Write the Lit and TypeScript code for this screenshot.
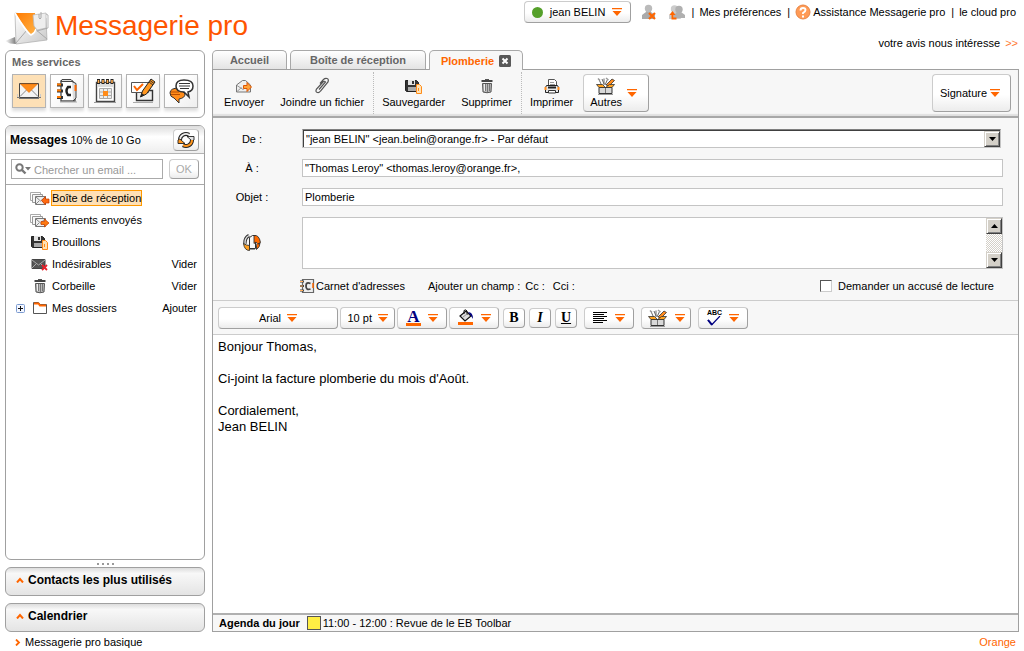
import { LitElement, html, css, svg, TemplateResult } from "lit";
import { customElement, property, state } from "lit/decorators.js";
import { classMap } from "lit/directives/class-map.js";

const O = "#ff6600";

interface Icon {
  w: number;
  h: number;
  art: TemplateResult;
}

const stack = svg`<path d="M.5 1.5h10v8H.5z" fill="#fff" stroke="#aaa"/><path d="M2.500 3.500h10v8h-10z" fill="#f6f6f6" stroke="#999"/><path d="M5.500 5.500h10v8h-10z" fill="#eee" stroke="#777"/><path d="M6 6l4.500 4L15 6M6 13l3-3M15 13l-3-3" fill="none" stroke="#888"/>`;
const floppy = svg`<path d="M.5 1.500h11l2 2v9H1.500l-1-1z" fill="#333" stroke="#222"/><path d="M3 1h7v5H3z" fill="#e4e4e4"/><path d="M7 2h2v3H7z" fill="#333"/><path d="M3 8h8v4H3z" fill="#aaa"/><path d="M11.500 5.500h3l2 2v7h-5z" fill="#ffe2b5" stroke="#ff8c1a"/><path d="M13.500 9v3" stroke="#ff8c1a"/>`;
const trash = svg`<path d="M6 1.500h4" stroke="#555" fill="none"/><path d="M2.500 3h11" stroke="#444" stroke-width="2" fill="none"/><path d="M3.500 5.500h9l-.500 8.500q-4 1.500-8 0z" fill="#bbb" stroke="#555"/><path d="M6.500 6v7M8.500 6v8M10.500 6v7" stroke="#777" fill="none"/><path d="M5.500 6v7" stroke="#eee"/>`;
const tools = svg`<path d="M5.500 8L3 2.500M8 8V1.500M9 8l2.500-5.500M6 2l2 5" stroke="#666" fill="none"/><path d="M2 1.500l2 2M10 1l2.500 2" stroke="#999" stroke-width="1.500"/><path d="M10 8l6-6 2.500 1.500L13 9z" fill="#ff8a1c" stroke="#333" stroke-width=".8"/><path d="M3 10.500h13v6H3z" fill="#d8d8d8" stroke="#333"/><path d="M.5 7.500h6l3 3H3zM18.500 7.500h-5l-4 3H16z" fill="#ffa320" stroke="#333" stroke-width=".8"/><path d="M9.500 11v5" stroke="#777"/><path d="M2 17.500h15" stroke="#999"/>`;
const book = svg`<path d="M7 3h11l3 3v17H7z" fill="#fff" stroke="#555" stroke-width="1.400"/><path d="M18 3.500l4 2V20l-3 3" fill="#ddd" stroke="#444"/><path d="M21.500 7v6" stroke="${O}" stroke-width="2"/><path d="M8 1.500h9l2 2H7z" fill="#ddd" stroke="#444"/><path d="M17 9h-3q-3 4 0 8h3" fill="none" stroke="#222" stroke-width="2.400"/><path d="M3 7h6M3 13h6M3 19.500h6" stroke="#333" stroke-width="3"/><path d="M3 6.500h4M3 12.500h4M3 19h4" stroke="#ff7a00" stroke-width="2"/><path d="M6 24h17" stroke="#aaa"/>`;

const icons: Record<string, Icon> = {
  logo: { w: 44, h: 38, art: svg`<defs><linearGradient id="a" x2="1" y2="1"><stop stop-color="#ff7a00"/><stop offset="1" stop-color="#ffb347"/></linearGradient><linearGradient id="b" x2="1"><stop stop-color="#888" stop-opacity="0"/><stop offset="1" stop-color="#777"/></linearGradient><linearGradient id="c" x2="1" y2="1"><stop stop-color="#fff"/><stop offset="1" stop-color="#c9c9c9"/></linearGradient></defs><g transform="translate(0 4)"><path d="M0 30l10-4 1 7-6-.5z" fill="url(#b)"/><path d="M10 2l31 5 1 22-31 4z" fill="url(#c)" stroke="#aaa" stroke-width=".7"/><path d="M11 32l11-13M42 28L30 18" stroke="#aaa" fill="none"/><path d="M10 2h20l1 18-5 4Q19 15 10 2z" fill="url(#a)"/><path d="M10 2q11 19 16 22 4-2 5-6" fill="none" stroke="#fff" stroke-width="1.500"/><path d="M28 4l13-2v15l-9 2-3-4z" fill="#eee" stroke="#bbb" stroke-width=".8"/><path d="M41 3l2 1v13l-11 3" fill="none" stroke="#999" stroke-width=".7"/><path d="M34 3v4q1 2 2 0V1" fill="none" stroke="#999" stroke-width=".8"/></g>` },
  mail: { w: 26, h: 26, art: svg`<path d="M3.500 5.500h19v14h-19z" fill="#f3f3f3" stroke="#444"/><path d="M4 18.500l7-7M22 18.500l-7-7" stroke="#888"/><path d="M4.500 6h17L13 14.500z" fill="#ff8c1a" stroke="#e06a00" stroke-width=".6"/><path d="M1 19.500h3M22 19.500h3M3 20.500h20" stroke="#777"/><path d="M1.500 16v3M24.500 16v3" stroke="#ccc"/>` },
  contacts: { w: 26, h: 26, art: book },
  calendar: { w: 26, h: 26, art: svg`<path d="M4.500 4.500h18v19h-18z" fill="#fff" stroke="#444" stroke-width="1.400"/><path d="M5 5h17v4H5z" fill="#ddd"/><path d="M6.500 1v5M11 1v5M15.500 1v5M20 1v5" stroke="#222" stroke-width="3"/><path d="M6.500 2v3M11 2v3M15.500 2v3M20 2v3" stroke="#ffab4d" stroke-width="1.600"/><path d="M7.500 10.500h12v10h-12zM7.500 14h12M7.500 17.500h12M11.500 10v11M15.500 10v11" fill="#eee" stroke="#aaa"/><path d="M11 13h5v5h-5z" fill="#ff8c1a"/><path d="M2 24.500h22" stroke="#999"/>` },
  tasks: { w: 26, h: 26, art: svg`<path d="M6.500 12.500h16v10h-16z" fill="#eee" stroke="#333" stroke-width="1.400"/><path d="M1.500 4.500h17v10h-17z" fill="#fff" stroke="#555"/><path d="M4 8l3 4 6-6" fill="none" stroke="${O}" stroke-width="2"/><path d="M10.500 19l2-6L21 1l4 3-8.500 12z" fill="#ff961e" stroke="#222"/><path d="M19 4l4 3M20 2.500l4 3" stroke="#333"/><path d="M10.500 19l4-2-3-2z" fill="#222"/><path d="M3 24.500h20" stroke="#aaa"/>` },
  chat: { w: 26, h: 26, art: svg`<path d="M11 10q-9 0-9 5 0 4 4 5l5 5v-4q6-1 6-5z" fill="#ff8c1a" stroke="#333"/><path d="M3 14h8M3 16.500h9" stroke="#b84e00"/><path d="M16 2q9 0 9 6 0 5-5 6l1 5-5-5q-8 0-8-6 0-6 8-6z" fill="#fff" stroke="#333" stroke-width="1.500"/><path d="M11 5.500h11M11 8h11M12 10.500h9" stroke="#333"/>` },
  refresh: { w: 18, h: 18, art: svg`<path d="M3 9a6 6 0 0 1 9-5.200" fill="none" stroke="#222" stroke-width="4"/><path d="M3 9a6 6 0 0 1 9-5.200" fill="none" stroke="#eee" stroke-width="1.800"/><path d="M10 5.500h7V9q-2 2-3 0z" fill="#e4e4e4" stroke="#222" stroke-width=".9"/><path d="M15 9a6 6 0 0 1-9 5.200" fill="none" stroke="#222" stroke-width="4"/><path d="M15 9a6 6 0 0 1-9 5.200" fill="none" stroke="#ff961e" stroke-width="2"/><path d="M8 12.500H1V9q2-2 3 0z" fill="#ff961e" stroke="#222" stroke-width=".9"/>` },
  swap: { w: 18, h: 18, art: svg`<path d="M6.500 3.500l3-2h3v13h-6z" fill="#f8f8f8" stroke="#333"/><path d="M4 15.500h8" stroke="#999"/><path d="M6 1.500Q1.500 4 2 10" fill="none" stroke="#333" stroke-width="3.400"/><path d="M6 1.500Q1.500 4 2 10" fill="none" stroke="#ddd" stroke-width="1.400"/><path d="M.5 9.500q3 2 6 2v5q-5 0-6-7z" fill="#ffa020" stroke="#333" stroke-width=".9"/><path d="M11 1.500q5-1 6.500 7L15 10l2-1q0 4-3.500 6.500v-4Q15 9 13 8l-2 1.500z" fill="#ff6a00" stroke="#333" stroke-width=".9"/>` },
  search: { w: 17, h: 12, art: svg`<circle cx="4.500" cy="4.500" r="3.200" fill="none" stroke="#777" stroke-width="2"/><path d="M7 7l3.500 3.500" stroke="#777" stroke-width="2.400"/><path d="M10 4h6l-3 3.500z" fill="#777"/>` },
  inbox: { w: 20, h: 15, art: svg`${stack}<path d="M11.500 9.500l4-4v2.500h3.500v4h-3.500v2z" fill="#ff6a10" stroke="#c43c00" stroke-width=".7"/>` },
  sent: { w: 20, h: 15, art: svg`${stack}<path d="M11 8.500h3.500V6l4.500 4-4.500 4v-2.500H11z" fill="#ff7a10" stroke="#c43c00" stroke-width=".7"/>` },
  draft: { w: 18, h: 15, art: floppy },
  junk: { w: 18, h: 13, art: svg`<path d="M1 1.500h13v9H1z" fill="#555" stroke="#444"/><path d="M1 2l6.500 5L14 2M1 10l4-4M14 10l-4-4" fill="none" stroke="#aaa"/><path d="M11 7l5 5M16 7l-5 5" stroke="#e8202a" stroke-width="1.800"/>` },
  trash: { w: 16, h: 16, art: trash },
  folder: { w: 16, h: 14, art: svg`<path d="M1.500 12.500v-11h5l1.500 2h6.500v9z" fill="#fff" stroke="#555"/><path d="M2 2.500h4.500L8 4.500h6" fill="none" stroke="${O}" stroke-width="2"/>` },
  send: { w: 18, h: 14, art: svg`<path d="M1.500 6l6-4.500h3L15.500 6v7h-14z" fill="#eee" stroke="#777"/><path d="M2 6.500l6 4 6-4M2 12.500l4.500-4" fill="none" stroke="#999"/><path d="M8.500 6.500H12V3.500L16.500 8 12 12.500V9.500H8.500z" fill="#ffa43a" stroke="#e05500"/>` },
  clip: { w: 18, h: 18, art: svg`<path d="M6 12.500L12.500 5q-1-1.500-2.500 0L3.500 12q-1.500 3 1 3.500 1.500.5 3-1.500L15 5q1-3-1-3.500t-3.500 1L7 6.500" fill="none" stroke="#555" stroke-width="1.200"/>` },
  print: { w: 16, h: 16, art: svg`<path d="M4.500 1.500h6l2 2v4h-8z" fill="#fff" stroke="#555"/><path d="M6 4.500h4M6 6.500h5" stroke="#999"/><path d="M2.500 7.500h11l1 2v5h-13v-5z" fill="#e6e6e6" stroke="#222"/><path d="M1.500 9v3M14.500 9v3" stroke="#ff8c1a" stroke-width="2"/><path d="M4 8.500h8v2H4z" fill="#222"/><path d="M4.500 12.500h7v2.500h-7z" fill="#fff" stroke="#333"/>` },
  tools: { w: 20, h: 18, art: tools },
  book: { w: 16, h: 16, art: svg`<path d="M3.500 1.500h11v13h-11z" fill="#eee" stroke="#666" stroke-width="1.200"/><path d="M11.500 5.500Q7 3.500 7 8t4.500 3" fill="none" stroke="#444" stroke-width="1.800"/><path d="M14 5v5" stroke="${O}" stroke-width="1.500"/><path d="M1 3.500h4M1 8h4M1 12.500h4" stroke="#444" stroke-width="2"/><path d="M1 3.500h3M1 8h3M1 12.500h3" stroke="#ffb060"/>` },
  userOff: { w: 16, h: 17, art: svg`<path d="M1 15v-4l4-3V3q2-3 5 0v5l4 3v4z" fill="#aaa"/><circle cx="7.500" cy="4.500" r="3.700" fill="#bbb"/><path d="M8 9l6 6M14 9l-6 6" stroke="${O}" stroke-width="2.200"/>` },
  users: { w: 18, h: 17, art: svg`<circle cx="6.500" cy="5" r="3.700" fill="#ccc"/><path d="M1 15v-4l3-3h6l3 7z" fill="#ccc"/><circle cx="11" cy="5.500" r="3.700" fill="#b0b0b0"/><path d="M6 14v-3l3-3h4l4 3v3z" fill="#b0b0b0"/><path d="M8.500 14.500h-4V10" fill="none" stroke="${O}" stroke-width="2"/><path d="M1.500 11l3-4 3 4z" fill="${O}"/>` },
  help: { w: 16, h: 16, art: svg`<circle cx="8" cy="8" r="7" fill="#ff9a55" stroke="#e88544"/><path d="M5.500 6.500q0-2.500 2.500-2.500t2.500 2q0 1.500-2.500 3v1" fill="none" stroke="#fff" stroke-width="1.900"/><path d="M7 11.500h2v2H7z" fill="#fff"/>` },
  close: { w: 12, h: 12, art: svg`<rect width="12" height="12" rx="1.500" fill="#595959"/><path d="M3.500 3.500l5 5M8.500 3.500l-5 5" stroke="#fff" stroke-width="2"/>` },
  drop: { w: 10, h: 8, art: svg`<path d="M0 0h10v1.300H0zM.5 3h9L5 8z" fill="${O}"/>` },
  up: { w: 8, h: 6, art: svg`<path d="M1 5.500L4 2l3 3.500" fill="none" stroke="${O}" stroke-width="2"/>` },
  right: { w: 6, h: 7, art: svg`<path d="M1 .5l3 3-3 3" fill="none" stroke="${O}" stroke-width="1.800"/>` },
  plus: { w: 9, h: 9, art: svg`<rect x=".5" y=".5" width="8" height="8" rx="1" fill="#f4f7ff" stroke="#7b9ad0"/><path d="M2 4.500h5M4.500 2v5" stroke="#111"/>` },
  tri: { w: 7, h: 4, art: svg`<path d="M0 0h7L3.500 4z" fill="#000"/>` },
  triUp: { w: 7, h: 4, art: svg`<path d="M0 4h7L3.500 0z" fill="#000"/>` },
  fill: { w: 16, h: 17, art: svg`<path d="M0 13h15v3H0z" fill="${O}"/><path d="M2 7l6-5 5 5-6 5z" fill="#ddd" stroke="#111" stroke-width="1.200"/><path d="M6 5V1.500Q8 0 9 2v4" fill="none" stroke="#111"/><path d="M10 3q5 0 5 7l-2-3z" fill="#000080"/><path d="M5 8l4-3" stroke="#999"/>` },
  align: { w: 15, h: 12, art: svg`<path d="M0 .5h14M0 2.500h11M0 4.500h14M0 6.500h11M0 8.500h14M0 10.500h10" stroke="#000"/>` },
  check: { w: 14, h: 10, art: svg`<path d="M1 4l4 4.500L13 0" fill="none" stroke="#000080" stroke-width="1.200"/><path d="M1 4l4 5" stroke="#000080" stroke-width="2"/>` },
};

const icon = (name: string) => {
  const i = icons[name];
  return html`<svg class="icon" aria-hidden="true" width=${i.w} height=${i.h} viewBox="0 0 ${i.w} ${i.h}">${i.art}</svg>`;
};

const base = css`
  * { box-sizing: border-box; }
  button, input, select, textarea { font: inherit; color: inherit; margin: 0; outline: none; }
  button { background: none; border: 0; padding: 0; cursor: pointer; }
  a { color: inherit; text-decoration: none; }
  .icon { display: block; flex: none; }
  .raised {
    border: 1px solid #ccc;
    border-right-color: #a0a0a0;
    border-bottom-color: #a0a0a0;
    border-radius: 4px;
    background: linear-gradient(#fff 55%, #ececec);
  }
`;

@customElement("mail-sidebar")
class MailSidebar extends LitElement {
  @state() private folder = 0;

  private services = [
    ["mail", "Messages"], ["contacts", "Contacts"], ["calendar", "Calendrier"], ["tasks", "Tâches"], ["chat", "Discussion"],
  ];
  private folders = [
    { icon: "inbox", name: "Boîte de réception" },
    { icon: "sent", name: "Eléments envoyés" },
    { icon: "draft", name: "Brouillons" },
    { icon: "junk", name: "Indésirables", action: "Vider" },
    { icon: "trash", name: "Corbeille", action: "Vider" },
    { icon: "folder", name: "Mes dossiers", action: "Ajouter", nested: true },
  ];

  static styles = [base, css`
    :host { display: flex; flex-direction: column; }
    .box { border: 1px solid #a0a0a0; border-radius: 6px; background: #fff; }
    .services { padding: 4px 6px 9px; margin-bottom: 7px; }
    h2 { margin: 0; font-size: 11px; line-height: 15px; color: #666; }
    .row { display: flex; gap: 4px; padding-top: 4px; }
    .service {
      width: 34px; height: 34px; display: grid; place-items: center;
      border: 1px solid #b4b4b4; background: linear-gradient(135deg, #fff 30%, #eee);
      box-shadow: 0 3px 3px #ddd;
    }
    .service.on { background: #fde0b6; }
    .messages { flex: 1; overflow: hidden; }
    .head {
      display: flex; align-items: center; justify-content: space-between; height: 28px;
      padding: 0 5px 0 4px; border-bottom: 1px solid #b4b4b4; background: linear-gradient(#ddd, #fff 40%, #eee);
    }
    .head b { font-size: 12px; }
    .sync { display: grid; place-items: center; width: 26px; height: 22px; }
    .search { display: flex; gap: 6px; height: 31px; padding: 5px 5px; border-bottom: 1px solid #a8a8a8; }
    .field { display: flex; align-items: center; flex: 1; min-width: 0; border: 1px solid #aaa; padding-left: 3px; gap: 2px; }
    .field input { border: 0; padding: 2px 0 0; width: 100%; min-width: 0; background: none; }
    .field input::placeholder { color: #999; opacity: 1; }
    .ok { width: 30px; color: #aaa; }
    ul { list-style: none; margin: 0; padding: 2px 7px 0 10px; }
    li { display: grid; grid-template-columns: 14px 20px 1fr auto; align-items: center; height: 22px; }
    .pic { display: grid; place-items: center; }
    .name { justify-self: start; border: 1px solid transparent; padding: 0; margin-left: 1px; line-height: 14px; }
    .name.on { background: #ffe0b5; border-color: #f90; }
    .grip { display: flex; justify-content: center; gap: 3px; padding: 3px 0 2px; }
    .grip i { width: 2px; height: 2px; background: #999; }
    .fold {
      display: flex; align-items: center; gap: 4px; height: 29px; margin-bottom: 7px; padding: 0 10px 3px; font-weight: bold; font-size: 12px;
      background: linear-gradient(#ddd, #f8f8f8 20%, #e4e4e4);
    }
    .last { margin-bottom: 0; }
  `];

  render() {
    return html`
      <section class="box services">
        <h2>Mes services</h2>
        <div class="row">
          ${this.services.map(([name, label], i) => html`<button class=${classMap({ service: true, on: i === 0 })} aria-label=${label}>${icon(name)}</button>`)}
        </div>
      </section>
      <section class="box messages">
        <div class="head">
          <span><b>Messages</b> 10% de 10 Go</span>
          <button class="sync raised" aria-label="Relever">${icon("refresh")}</button>
        </div>
        <div class="search">
          <div class="field">${icon("search")}<input aria-label="Chercher un email" placeholder="Chercher un email ..." /></div>
          <button class="ok raised">OK</button>
        </div>
        <ul>
          ${this.folders.map((f, i) => html`
            <li>
              <span>${f.nested ? icon("plus") : ""}</span>
              <span class="pic">${icon(f.icon)}</span>
              <button class=${classMap({ name: true, on: i === this.folder })} @click=${() => (this.folder = i)}>${f.name}</button>
              ${f.action ? html`<a href="#">${f.action}</a>` : ""}
            </li>`)}
        </ul>
      </section>
      <div class="grip"><i></i><i></i><i></i><i></i></div>
      <button class="box fold">${icon("up")}Contacts les plus utilisés</button>
      <button class="box fold last">${icon("up")}Calendrier</button>
    `;
  }
}

@customElement("mail-composer")
class MailComposer extends LitElement {
  @property() message = "";

  static styles = [base, css`
    :host { display: flex; flex-direction: column; min-width: 0; }
    .tabs { display: flex; gap: 3px; height: 20px; margin-bottom: -1px; z-index: 1; }
    .tab {
      display: flex; align-items: center; justify-content: center; gap: 5px; height: 19px; font-weight: bold; color: #666;
      border: 1px solid #a8a8a8; border-bottom: 0; border-radius: 5px 5px 0 0; background: linear-gradient(#fff, #e4e4e4);
    }
    .home { width: 75px; }
    .in { width: 136px; }
    .current { width: 94px; height: 20px; color: #f60; background: #f7f7f7; }
    .panel { flex: 1; display: flex; flex-direction: column; border: 1px solid #a0a0a0; background: #f7f7f7; }
    .actions { display: flex; align-items: center; height: 48px; padding: 0 7px 0 11px; border-bottom: 2px solid #a8a8a8; box-shadow: inset 0 -2px 1px #e0e0e0; }
    .group { display: flex; gap: 16px; padding-right: 9px; margin-right: 8px; height: 42px; align-items: center; border-right: 1px dotted #bbb; }
    .group:nth-child(3) { border: 0; padding-right: 0; margin-right: 10px; }
    .action { display: flex; flex-direction: column; align-items: center; line-height: 14px; }
    .pic { display: grid; place-items: center; height: 18px; }
    .others { display: flex; align-items: center; gap: 5px; width: 66px; height: 38px; padding: 0 6px; }
    .sign { display: flex; align-items: center; justify-content: center; gap: 3px; margin-left: auto; width: 79px; height: 38px; padding-right: 3px; }
    form { display: grid; grid-template-columns: 78px 1fr; column-gap: 11px; row-gap: 11px; align-items: center; padding: 11px 15px 6px 0; border-bottom: 1px solid #ccc; }
    .label { justify-self: center; }
    .text { width: 100%; height: 18px; border: 1px solid #c4c4c4; background: #fff; padding: 0 2px; }
    .from { display: flex; height: 19px; margin-right: 2px; border: 1px solid #c4c4c4; border-top-color: #808080; box-shadow: inset 1px 1px #404040; background: #fff; padding: 1px 0 0 1px; }
    .from select { flex: 1; min-width: 0; border: 0; appearance: none; background: none; padding: 0 2px; }
    .knob { display: grid; place-items: center; width: 16px; height: 16px; flex: none; background: #d4d0c8; border: 1px solid #d4d0c8; border-right-color: #404040; border-bottom-color: #404040; box-shadow: inset 1px 1px #fff, inset -1px -1px #808080; pointer-events: none; }
    .big { display: flex; height: 52px; border: 1px solid #c4c4c4; background: #fff; }
    .big textarea { flex: 1; border: 0; resize: none; background: none; overflow: hidden; }
    .bar { display: flex; flex-direction: column; justify-content: space-between; background: repeating-conic-gradient(#d4d0c8 0 25%, #fff 0 50%) 0 0 / 2px 2px; }
    .extra { grid-column: 1 / -1; display: flex; align-items: center; height: 16px; margin: -2px 9px 0 86px; }
    .extra a { margin-left: 1px; }
    .extra .add { margin: 0 4px 0 23px; }
    .extra .cci { margin-left: 8px; }
    .receipt { display: flex; align-items: center; gap: 6px; margin-left: auto; }
    .receipt input { appearance: none; width: 12px; height: 12px; border: 1px solid; border-color: #555 #ccc #ccc #555; background: #fff; }
    .format { display: flex; align-items: center; height: 34px; padding: 0 5px; gap: 2px; border-bottom: 1px solid #ccc; }
    .tool { display: flex; align-items: center; justify-content: center; gap: 3px; width: 50px; height: 22px; }
    .tool.pair { gap: 7px; }
    .tool select { appearance: none; border: 0; background: none; padding: 0; }
    .font { width: 120px; }
    .font select { width: 25px; }
    .size { width: 55px; }
    .size select { width: 27px; }
    .letters { display: flex; gap: 4px; margin: 0 5px 0 2px; }
    .letter { width: 22px; font: bold 14px/18px "Liberation Serif", serif; }
    .italic { font-style: italic; }
    .under { text-decoration: underline; }
    .ink { font: bold 17px/13px "Liberation Serif", serif; color: #000080; border-bottom: 3px solid #f60; padding: 0 1px; }
    .wide { margin-right: 5px; }
    .spell { display: grid; justify-items: center; font: bold 7px/7px "Liberation Sans", sans-serif; }
    .body { flex: 1; border: 0; resize: none; background: #fff; padding: 4px 5px; font-size: 13px; line-height: 16px; }
    .agenda { display: flex; align-items: center; height: 18px; padding: 0 6px; border-top: 2px solid #b0b0b0; background: #f7f7f7; }
    .chip { width: 14px; height: 14px; margin: 0 2px 0 7px; background: #fe4; border: 1px solid #555; }
  `];

  private action(name: string, label: string) {
    return html`<button class="action"><span class="pic">${icon(name)}</span>${label}</button>`;
  }

  render() {
    return html`
      <nav class="tabs">
        <button class="tab home">Accueil</button>
        <button class="tab in">Boîte de réception</button>
        <button class="tab current">Plomberie ${icon("close")}</button>
      </nav>
      <div class="panel">
        <div class="actions">
          <div class="group">${this.action("send", "Envoyer")}${this.action("clip", "Joindre un fichier")}</div>
          <div class="group">${this.action("draft", "Sauvegarder")}${this.action("trash", "Supprimer")}</div>
          <div class="group">${this.action("print", "Imprimer")}</div>
          <button class="others raised"><span class="action"><span class="pic">${icon("tools")}</span>Autres</span>${icon("drop")}</button>
          <button class="sign raised">Signature ${icon("drop")}</button>
        </div>
        <form>
          <label class="label" for="from">De :</label>
          <div class="from">
            <select id="from"><option>"jean BELIN" &lt;jean.belin@orange.fr&gt; - Par défaut</option></select>
            <span class="knob">${icon("tri")}</span>
          </div>
          <label class="label" for="to">À :</label>
          <input class="text" id="to" .value=${'"Thomas Leroy" <thomas.leroy@orange.fr>,'} />
          <label class="label" for="subject">Objet :</label>
          <input class="text" id="subject" .value=${"Plomberie"} />
          <label class="label" for="files" aria-label="Pièces jointes">${icon("swap")}</label>
          <div class="big">
            <textarea id="files"></textarea>
            <div class="bar"><span class="knob">${icon("triUp")}</span><span class="knob">${icon("tri")}</span></div>
          </div>
          <div class="extra">
            ${icon("book")}<a href="#">Carnet d'adresses</a>
            <span class="add">Ajouter un champ :</span><a href="#" class="cc">Cc :</a><a href="#" class="cci">Cci :</a>
            <label class="receipt"><input type="checkbox" />Demander un accusé de lecture</label>
          </div>
        </form>
        <div class="format">
          <span class="tool font raised"><select aria-label="Police"><option>Arial</option></select>${icon("drop")}</span>
          <span class="tool size raised"><select aria-label="Taille"><option>10 pt</option></select>${icon("drop")}</span>
          <button class="tool pair raised" aria-label="Couleur du texte"><span class="ink">A</span>${icon("drop")}</button>
          <button class="tool pair raised" aria-label="Couleur de fond">${icon("fill")}${icon("drop")}</button>
          <div class="letters">
            <button class="letter raised">B</button>
            <button class="letter italic raised">I</button>
            <button class="letter under raised">U</button>
          </div>
          <button class="tool pair wide raised" aria-label="Alignement">${icon("align")}${icon("drop")}</button>
          <button class="tool pair wide raised" aria-label="Outils">${icon("tools")}${icon("drop")}</button>
          <button class="tool pair raised" aria-label="Orthographe"><span class="spell">ABC${icon("check")}</span>${icon("drop")}</button>
        </div>
        <textarea class="body" aria-label="Message" .value=${this.message}></textarea>
        <div class="agenda"><b>Agenda du jour</b><span class="chip"></span>11:00 - 12:00 : Revue de le EB Toolbar</div>
      </div>
    `;
  }
}

@customElement("app-root")
class AppRoot extends LitElement {
  static styles = [base, css`
    :host { display: flex; flex-direction: column; min-height: 100vh; background: #fff; color: #000; font: 11px/14px "Liberation Sans", Arial, sans-serif; }
    header { display: flex; justify-content: space-between; height: 50px; padding: 1px 6px 0 5px; }
    .brand { display: flex; align-items: center; gap: 6px; }
    h1 { margin: 0; font-size: 28px; line-height: 32px; font-weight: normal; color: #ff5500; }
    .right { display: flex; flex-direction: column; align-items: flex-end; gap: 13px; }
    .links { display: flex; align-items: center; height: 22px; padding-right: 2px; }
    .user { display: flex; align-items: center; justify-content: center; gap: 7px; width: 107px; height: 22px; margin-right: 10px; }
    .dot { width: 11px; height: 11px; border-radius: 6px; background: #55a02a; }
    .people { margin-right: 11px; }
    .sep { margin: 0 5px 0 6px; }
    .help { display: flex; align-items: center; gap: 2px; }
    .hot { color: #ff7a33; margin-left: 2px; }
    main { flex: 1; display: grid; grid-template-columns: 200px minmax(0, 1fr); column-gap: 7px; padding: 0 5px; }
    footer { display: flex; justify-content: space-between; height: 19px; padding: 3px 8px 0 15px; }
    .basic { display: flex; align-items: center; gap: 4px; height: 14px; }
    .orange { color: #f60; }
  `];

  render() {
    return html`
      <header>
        <div class="brand">${icon("logo")}<h1>Messagerie pro</h1></div>
        <div class="right">
          <nav class="links">
            <button class="user raised"><span class="dot"></span>jean BELIN ${icon("drop")}</button>
            <button class="people" aria-label="Se déconnecter">${icon("userOff")}</button><button aria-label="Changer de compte">${icon("users")}</button>
            <span class="sep">|</span><a href="#">Mes préférences</a><span class="sep">|</span><a href="#" class="help">${icon("help")}Assistance Messagerie pro</a><span class="sep">|</span><a href="#">le cloud pro</a>
          </nav>
          <a href="#">votre avis nous intéresse <span class="hot">&gt;&gt;</span></a>
        </div>
      </header>
      <main>
        <mail-sidebar></mail-sidebar>
        <mail-composer .message=${"Bonjour Thomas,\n\nCi-joint la facture plomberie du mois d'Août.\n\nCordialement,\nJean BELIN"}></mail-composer>
      </main>
      <footer>
        <a href="#" class="basic">${icon("right")}Messagerie pro basique</a>
        <a href="#" class="orange">Orange</a>
      </footer>
    `;
  }
}
